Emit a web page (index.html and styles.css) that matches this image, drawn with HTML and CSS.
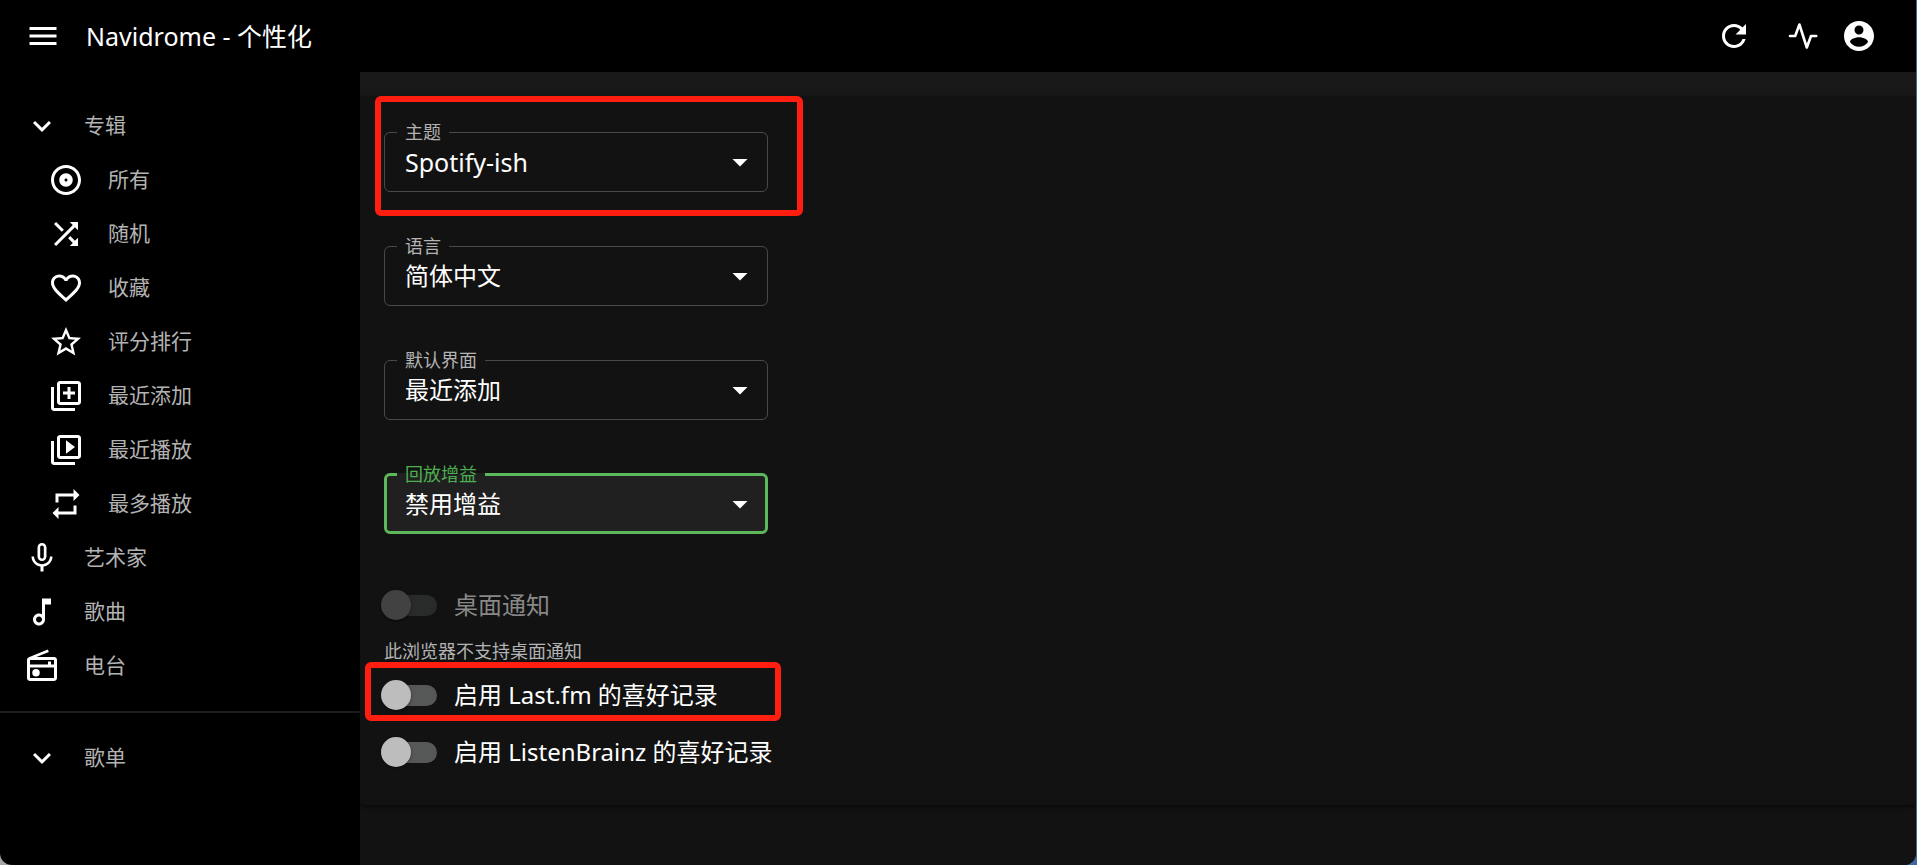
FILE: index.html
```html
<!DOCTYPE html>
<html lang="zh">

<head>
    <meta charset="UTF-8">
    <meta name="viewport" content="width=device-width, initial-scale=1.0">
    <title>Navidrome - 个性化</title>
    <link rel="stylesheet" href="styles.css">
</head>

<body>
    <div class="app">
        <header class="app-bar">
            <button type="button" class="icon-button" aria-label="菜单">
                <svg viewBox="0 0 24 24"><path d="M3 18h18v-2H3v2zm0-5h18v-2H3v2zm0-7v2h18V6H3z"/></svg>
            </button>
            <h1>Navidrome - 个性化</h1>
            <div class="actions">
                <button type="button" class="icon-button" aria-label="刷新">
                    <svg viewBox="0 0 24 24"><path d="M17.65 6.35C16.2 4.9 14.21 4 12 4c-4.42 0-7.99 3.58-7.99 8s3.57 8 7.99 8c3.73 0 6.84-2.55 7.73-6h-2.08c-.82 2.33-3.04 4-5.65 4-3.31 0-6-2.69-6-6s2.69-6 6-6c1.66 0 3.14.69 4.22 1.78L13 11h7V4l-2.35 2.35z"/></svg>
                </button>
                <button type="button" class="icon-button activity" aria-label="活动">
                    <svg viewBox="0 0 36 36"><path class="line" d="M5 18h5.200l4.200-11.500 7.400 23 4.200-11.500h5.200"/></svg>
                </button>
                <button type="button" class="icon-button" aria-label="用户">
                    <svg viewBox="0 0 24 24"><path d="M12 2C6.48 2 2 6.480 2 12s4.480 10 10 10 10-4.480 10-10S17.520 2 12 2zm0 3c1.660 0 3 1.340 3 3s-1.340 3-3 3-3-1.340-3-3 1.340-3 3-3zm0 14.200c-2.500 0-4.710-1.280-6-3.220.03-1.990 4-3.080 6-3.080 1.990 0 5.970 1.090 6 3.080-1.290 1.940-3.500 3.220-6 3.220z"/></svg>
                </button>
            </div>
        </header>

        <div class="content">
            <!-- 侧边栏 -->
            <nav class="sidebar">
                <button type="button" class="menu-item">
                    <svg viewBox="0 0 24 24"><path d="M16.590 8.590L12 13.170 7.410 8.590 6 10l6 6 6-6z"/></svg>
                    专辑
                </button>
                <a href="#all" class="menu-item sub">
                    <svg viewBox="0 0 24 24"><path d="M12 2C6.480 2 2 6.480 2 12s4.480 10 10 10 10-4.480 10-10S17.520 2 12 2zm0 18c-4.410 0-8-3.590-8-8s3.590-8 8-8 8 3.590 8 8-3.590 8-8 8zm0-12.500c-2.490 0-4.500 2.010-4.500 4.500s2.010 4.500 4.500 4.500 4.500-2.010 4.500-4.500-2.010-4.500-4.500-4.500zm0 5.500c-.55 0-1-.45-1-1s.45-1 1-1 1 .45 1 1-.45 1-1 1z"/></svg>
                    所有
                </a>
                <a href="#random" class="menu-item sub">
                    <svg viewBox="0 0 24 24"><path d="M10.590 9.170L5.410 4 4 5.410l5.170 5.170 1.420-1.410zM14.500 4l2.040 2.040L4 18.590 5.410 20 17.960 7.460 20 9.500V4h-5.500zm.33 9.410l-1.410 1.410 3.130 3.130L14.500 20H20v-5.500l-2.040 2.040-3.130-3.130z"/></svg>
                    随机
                </a>
                <a href="#starred" class="menu-item sub">
                    <svg viewBox="0 0 24 24"><path d="M16.500 3c-1.740 0-3.410.81-4.500 2.090C10.910 3.810 9.240 3 7.500 3 4.420 3 2 5.420 2 8.500c0 3.780 3.400 6.860 8.550 11.540L12 21.350l1.450-1.320C18.600 15.360 22 12.280 22 8.500 22 5.420 19.580 3 16.500 3zm-4.400 15.550l-.1.100-.1-.1C7.140 14.240 4 11.390 4 8.500 4 6.500 5.500 5 7.500 5c1.540 0 3.040.99 3.570 2.360h1.870C13.460 5.990 14.960 5 16.500 5c2 0 3.500 1.500 3.500 3.500 0 2.890-3.140 5.740-7.900 10.050z"/></svg>
                    收藏
                </a>
                <a href="#rated" class="menu-item sub">
                    <svg viewBox="0 0 24 24"><path d="M22 9.240l-7.190-.62L12 2 9.190 8.630 2 9.240l5.460 4.730L5.820 21 12 17.270 18.180 21l-1.630-7.030L22 9.240zM12 15.400l-3.760 2.270 1-4.280-3.320-2.880 4.380-.38L12 6.100l1.710 4.040 4.380.38-3.320 2.880 1 4.280L12 15.400z"/></svg>
                    评分排行
                </a>
                <a href="#added" class="menu-item sub">
                    <svg viewBox="0 0 24 24"><path d="M4 6H2v14c0 1.100.9 2 2 2h14v-2H4V6zm16-4H8c-1.100 0-2 .9-2 2v12c0 1.100.9 2 2 2h12c1.100 0 2-.9 2-2V4c0-1.100-.9-2-2-2zm0 14H8V4h12v12zm-7-2h2v-3h3V9h-3V6h-2v3h-3v2h3z"/></svg>
                    最近添加
                </a>
                <a href="#played" class="menu-item sub">
                    <svg viewBox="0 0 24 24"><path d="M4 6H2v14c0 1.100.9 2 2 2h14v-2H4V6zm16-4H8c-1.100 0-2 .9-2 2v12c0 1.100.9 2 2 2h12c1.100 0 2-.9 2-2V4c0-1.100-.9-2-2-2zm0 14H8V4h12v12zM12 5.500v9l6-4.500z"/></svg>
                    最近播放
                </a>
                <a href="#most-played" class="menu-item sub">
                    <svg viewBox="0 0 24 24"><path d="M7 7h10v3l4-4-4-4v3H5v6h2V7zm10 10H7v-3l-4 4 4 4v-3h12v-6h-2v4z"/></svg>
                    最多播放
                </a>
                <a href="#artist" class="menu-item">
                    <svg viewBox="0 0 24 24"><path d="M12 14c1.660 0 2.990-1.340 2.990-3L15 5c0-1.660-1.340-3-3-3S9 3.340 9 5v6c0 1.660 1.340 3 3 3zm-1.200-9.100c0-.66.54-1.200 1.200-1.200s1.200.54 1.200 1.200l-.01 6.200c0 .66-.53 1.200-1.190 1.200s-1.200-.54-1.200-1.200V4.900zm6.500 6.100c0 3-2.540 5.100-5.300 5.100S6.700 14 6.700 11H5c0 3.410 2.720 6.230 6 6.720V21h2v-3.280c3.280-.48 6-3.300 6-6.720h-1.700z"/></svg>
                    艺术家
                </a>
                <a href="#song" class="menu-item">
                    <svg viewBox="0 0 24 24"><path d="M12 3l.01 10.550c-.59-.34-1.270-.55-2-.55C7.790 13 6 14.790 6 17s1.790 4 4.010 4S14 19.210 14 17V7h4V3h-6zm-1.990 16c-1.100 0-2-.9-2-2s.9-2 2-2 2 .9 2 2-.9 2-2 2z"/></svg>
                    歌曲
                </a>
                <a href="#radio" class="menu-item">
                    <svg viewBox="0 0 24 24"><path d="M20 6H8.300l8.260-3.340L15.880 1 3.240 6.150C2.510 6.430 2 7.170 2 8v12c0 1.100.89 2 2 2h16c1.110 0 2-.9 2-2V8c0-1.110-.89-2-2-2zm0 2v3h-2V9h-2v2H4V8h16zM4 20v-7h16v7H4z"/><circle cx="8" cy="16.500" r="2.500"/></svg>
                    电台
                </a>
                <hr>
                <button type="button" class="menu-item">
                    <svg viewBox="0 0 24 24"><path d="M16.590 8.590L12 13.170 7.410 8.590 6 10l6 6 6-6z"/></svg>
                    歌单
                </button>
            </nav>

            <main>
                <form class="card">
                    <fieldset class="field marked">
                        <legend><label for="theme">主题</label></legend>
                        <select id="theme">
                            <option>Spotify-ish</option>
                        </select>
                        <svg viewBox="0 0 24 24"><path d="M7 10l5 5 5-5z"/></svg>
                    </fieldset>
                    <fieldset class="field">
                        <legend><label for="language">语言</label></legend>
                        <select id="language">
                            <option>简体中文</option>
                        </select>
                        <svg viewBox="0 0 24 24"><path d="M7 10l5 5 5-5z"/></svg>
                    </fieldset>
                    <fieldset class="field">
                        <legend><label for="default-view">默认界面</label></legend>
                        <select id="default-view">
                            <option>最近添加</option>
                        </select>
                        <svg viewBox="0 0 24 24"><path d="M7 10l5 5 5-5z"/></svg>
                    </fieldset>
                    <fieldset class="field active">
                        <legend><label for="replay-gain">回放增益</label></legend>
                        <select id="replay-gain">
                            <option>禁用增益</option>
                        </select>
                        <svg viewBox="0 0 24 24"><path d="M7 10l5 5 5-5z"/></svg>
                    </fieldset>

                    <!-- 开关 -->
                    <div class="switches">
                        <label class="switch disabled">
                            <input type="checkbox" disabled aria-describedby="notice">
                            桌面通知
                        </label>
                        <p id="notice">此浏览器不支持桌面通知</p>
                        <label class="switch marked">
                            <input type="checkbox">
                            启用 Last.fm 的喜好记录
                        </label>
                        <label class="switch">
                            <input type="checkbox">
                            启用 ListenBrainz 的喜好记录
                        </label>
                    </div>
                </form>
            </main>
        </div>
    </div>
</body>

</html>
```

FILE: styles.css
```css
/* 页面基本样式 */
*,
*::before,
*::after {
    box-sizing: border-box;
}

body {
    font-family: "Noto Sans", "Noto Sans CJK SC", sans-serif;
    font-size: 24px;
    line-height: 1.5;
    background: linear-gradient(to right, #a5a5a5 50%, #3f68a0 50%);
    color: #fff;
    margin: 0;
}

svg {
    display: block;
    width: 36px;
    height: 36px;
    fill: currentColor;
    flex: none;
}

button,
select {
    font: inherit;
    color: inherit;
    background: none;
    border: none;
    padding: 0;
    cursor: pointer;
}

.app {
    display: flex;
    flex-direction: column;
    min-height: 100vh;
    margin-right: 1px;
    background-color: #000;
    border-radius: 0 0 12px 12px;
    overflow: hidden;
}

/* 顶部栏 */
.app-bar {
    display: flex;
    align-items: center;
    height: 72px;
    padding: 0 39px 0 25px;
}

h1 {
    margin: 0 0 0 25px;
    font-size: 25px;
    font-weight: 400;
    line-height: 36px;
}

.actions {
    display: flex;
    margin-left: auto;
}

.activity {
    margin: 0 20px 0 33px;
}

.line {
    fill: none;
    stroke: currentColor;
    stroke-width: 2.6;
    stroke-linejoin: round;
    stroke-linecap: round;
}

.content {
    display: flex;
    flex: 1;
}

/* 侧边栏 */
.sidebar {
    width: 360px;
    flex: none;
    padding-top: 27px;
}

.menu-item {
    display: flex;
    align-items: center;
    gap: 24px;
    width: 100%;
    height: 54px;
    padding-left: 24px;
    font-size: 21px;
    color: #b3b3b3;
    text-decoration: none;
}

.menu-item svg {
    color: #fff;
}

.sub {
    padding-left: 48px;
}

hr {
    margin: 18px 0;
    border: none;
    border-top: 2px solid #1d1d1d;
}

/* 设置表单 */
main {
    flex: 1;
    padding-top: 24px;
    background: linear-gradient(#181818 24px, #121212 24px);
}

.card {
    padding: 24px 24px 25px;
    background-color: #121212;
    border-radius: 6px;
    box-shadow: 0 2px 4px rgba(0, 0, 0, 0.5);
}

.field {
    position: relative;
    width: 384px;
    height: 72px;
    margin: 0 0 42px;
    padding: 0;
    border: 1px solid #494949;
    border-radius: 6px;
}

legend {
    margin-left: 12px;
    padding: 0 8px;
    font-size: 18px;
    line-height: 24px;
    color: #b3b3b3;
}

.field select {
    display: block;
    width: 100%;
    height: 36px;
    padding: 0 48px 0 20px;
    appearance: none;
    outline: none;
}

.field #theme {
    font-size: 25px;
}

.field svg {
    position: absolute;
    right: 9px;
    bottom: 11px;
    pointer-events: none;
}

.active {
    border: 3px solid #5db75b;
    background-color: #202020;
}

.active legend {
    margin-left: 10px;
    color: #4caf50;
}

.active select {
    padding-left: 18px;
}

.active svg {
    right: 7px;
    bottom: 9px;
}

/* 开关样式 */
.switches {
    display: flex;
    flex-direction: column;
    align-items: flex-start;
}

.switch {
    position: relative;
    display: flex;
    align-items: center;
    gap: 17px;
    height: 57px;
    cursor: pointer;
}

.switch input {
    position: relative;
    appearance: none;
    width: 56px;
    height: 30px;
    margin: 0 0 0 -3px;
}

.switch input::before {
    content: "";
    position: absolute;
    inset: 5px 0 4px 5px;
    border-radius: 11px;
    background-color: #565857;
}

.switch input::after {
    content: "";
    position: absolute;
    top: 0;
    left: 0;
    width: 30px;
    height: 30px;
    border-radius: 50%;
    background-color: #bdbdbd;
    box-shadow: 0 1px 3px rgba(0, 0, 0, 0.4);
}

.switch input:checked::after {
    left: 26px;
}

.disabled {
    color: #888;
    cursor: default;
}

.disabled input::before {
    background-color: #292b2a;
}

.disabled input::after {
    background-color: #424242;
}

#notice {
    margin: 0;
    padding-top: 4px;
    font-size: 18px;
    line-height: 29px;
    color: #b3b3b3;
}

/* 红色标记框 */
.marked::after {
    content: "";
    position: absolute;
    border: 6px solid #ff1e10;
    border-radius: 6px;
    pointer-events: none;
}

.field.marked::after {
    inset: -48px -36px -25px -10px;
}

.switch.marked::after {
    inset: -4px auto 2px -19px;
    width: 416px;
}
```
